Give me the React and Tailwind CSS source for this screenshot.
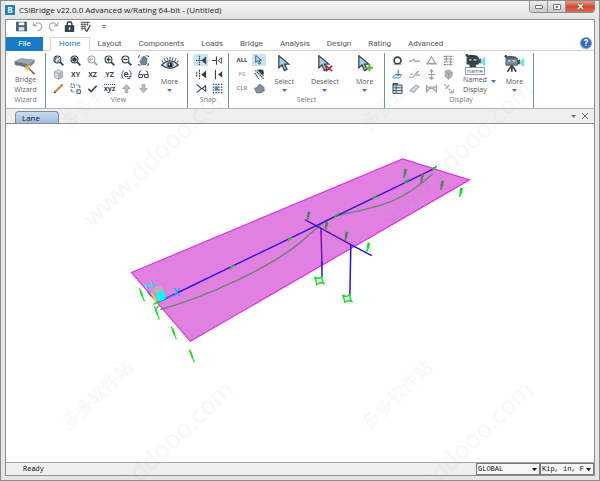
import React, { useState } from "react";
import clsx from "clsx";

const TABS = [
  "Home",
  "Layout",
  "Components",
  "Loads",
  "Bridge",
  "Analysis",
  "Design",
  "Rating",
  "Advanced",
];

const DARK = "#33444f";
const PALE = "#a3a3a3";

const Icon = ({ children, className = "h-[11px] w-[11px]", box = "0 0 16 16" }) => (
  <svg
    viewBox={box}
    className={clsx("shrink-0", className)}
    fill="none"
    stroke={DARK}
    strokeWidth="1.6"
    aria-hidden="true"
  >
    {children}
  </svg>
);

const Magnifier = ({ color = DARK, children }) => (
  <Icon>
    <g stroke={color}>
      <circle cx="6.5" cy="6.5" r="5" />
      <path d="M10.5 10.5L15 15" strokeWidth="2.6" />
      {children}
    </g>
  </Icon>
);

const Cursor = ({ className = "h-[17px] w-[17px]", children }) => (
  <Icon className={className} box="0 0 24 24">
    <path
      d="M4 1v17l4.5-4 3.5 8 3.5-1.6-3.6-7.6H18z"
      fill="#a9d3ea"
      strokeWidth="1.8"
    />
    {children}
  </Icon>
);

const Caret = ({ className = "h-[3px] w-[5px] text-[#3f74bd]" }) => (
  <svg viewBox="0 0 10 6" className={className} aria-hidden="true">
    <path d="M0 0h10L5 6z" fill="currentColor" />
  </svg>
);

// Small square ribbon button
const Tool = ({ label, active, children }) => (
  <button
    type="button"
    aria-label={label}
    title={label}
    className={clsx(
      "flex h-3 items-center justify-center text-[7px] leading-none font-bold text-[#33444f]",
      active && "bg-[#c9e4f7]"
    )}
  >
    {children}
  </button>
);

// Tall ribbon button with a caption
const BigTool = ({ label, children }) => (
  <button
    type="button"
    className="flex flex-col items-center text-[7px] leading-[10px] text-[#555]"
  >
    <span className="flex h-5 items-center">{children}</span>
    <span className="mt-1">{label}</span>
    <Caret className="mt-0.5 h-[3px] w-[5px] text-[#3f74bd]" />
  </button>
);

const Group = ({ title, className, children }) => (
  <section
    aria-label={title}
    className={clsx("flex flex-col border-r border-[#7391a8]", className)}
  >
    <div className="flex h-[42px] items-start">{children}</div>
    <h2 className="text-center text-[7px] leading-[10px] text-[#7a7a7a]">{title}</h2>
  </section>
);

const ViewTools = () => (
  <div className="grid grid-cols-6 gap-y-0.5 [&>button]:w-[17px]">
    <Tool label="Zoom window">
      <Magnifier>
        <path d="M4 9V4h5M9 6v3H6" strokeWidth="1.2" />
      </Magnifier>
    </Tool>
    <Tool label="Restore full view">
      <Magnifier>
        <circle cx="6.5" cy="6.5" r="2.6" fill="#173b46" />
      </Magnifier>
    </Tool>
    <Tool label="Previous zoom">
      <Magnifier color={PALE}>
        <path d="M9.5 6.5H3.5M6 4L3.5 6.5 6 9" strokeWidth="1.3" />
      </Magnifier>
    </Tool>
    <Tool label="Zoom in">
      <Magnifier>
        <path d="M3.5 6.5h6M6.5 3.5v6" strokeWidth="2" />
      </Magnifier>
    </Tool>
    <Tool label="Zoom out">
      <Magnifier>
        <path d="M3.5 6.5h6" strokeWidth="2" />
      </Magnifier>
    </Tool>
    <Tool label="Pan">
      <Icon>
        <path d="M1 4V1h3M12 1h3v3M15 12v3h-3M4 15H1v-3" strokeDasharray="2 1" />
        <path
          d="M5 14L2.5 8.500l1.500-.5L5.500 9.500V4h1.500V2.500h1.500V2H10v1.500h1.500V5H13v5l-1.500 4z"
          fill="#6f8a99"
          strokeWidth=".8"
        />
      </Icon>
    </Tool>

    <Tool label="3D view">
      <Icon>
        <path d="M8 1l6 3v8l-6 3-6-3V4z" fill="#d3d9dc" stroke="#85939b" strokeWidth="1" />
        <path d="M2 4l6 3 6-3M8 7v8" stroke="#85939b" strokeWidth="1" />
        <path d="M8 7l6-3v8l-6 3z" fill="#a9b6bd" stroke="none" />
      </Icon>
    </Tool>
    <Tool label="XY view">XY</Tool>
    <Tool label="XZ view">XZ</Tool>
    <Tool label="YZ view">YZ</Tool>
    <Tool label="Rotate view">
      <Icon>
        <path d="M4 2C0 6 1 11 4 14M12 2c4 4 3 9 0 12" strokeWidth="1.4" />
        <path d="M5 8h5c0-4-5-4-5 0s4 4 5 2" strokeWidth="1.6" />
        <path d="M12 10v4h-3" strokeWidth="1.3" />
      </Icon>
    </Tool>
    <Tool label="Perspective">
      <Icon>
        <path d="M1 8l2-5h2M15 8l-2-5h-2M6 9q2-2 4 0" strokeWidth="1.3" />
        <rect x="1" y="8" width="5.500" height="4.500" rx="1.500" strokeWidth="1.5" />
        <rect x="9.500" y="8" width="5.500" height="4.500" rx="1.500" strokeWidth="1.5" />
      </Icon>
    </Tool>

    <Tool label="Refresh view">
      <Icon>
        <path d="M3 13L13 3" stroke="#e8822b" strokeWidth="3" />
        <path d="M1 15l1-3.500L4.500 14z" fill={DARK} stroke="none" />
        <path d="M12 2l2 2" stroke="#b9552a" strokeWidth="2" />
      </Icon>
    </Tool>
    <Tool label="Object shrink">
      <Icon>
        <path d="M1.500 1.500h5v5h-5z" strokeDasharray="2 1" strokeWidth="1.2" />
        <path d="M10 10h5v5h-5z" strokeWidth="1.4" />
        <path d="M9 3h5v4M12 5l2 2 1.500-2M7 13H2V9M4 11L2 9 .5 11" stroke="#5689a5" strokeWidth="1.2" />
      </Icon>
    </Tool>
    <Tool label="Set display options">
      <Icon>
        <path d="M2 8.500l4 4L14 4" strokeWidth="2.4" />
      </Icon>
    </Tool>
    <Tool label="Show axes">
      <span className="border-t border-dotted border-[#33444f] leading-[7px]">xyz</span>
    </Tool>
    <Tool label="Move up in list">
      <Icon>
        <path d="M8 2l5.500 6H10v6H6V8H2.500z" fill="#bdbdbd" stroke="#999" strokeWidth="1" />
      </Icon>
    </Tool>
    <Tool label="Move down in list">
      <Icon>
        <path d="M8 14L2.500 8H6V2h4v6h3.500z" fill="#bdbdbd" stroke="#999" strokeWidth="1" />
      </Icon>
    </Tool>
  </div>
);

const SnapTools = () => (
  <div className="grid grid-cols-2 gap-x-0.5 gap-y-0.5 [&>button]:w-3.5">
    <Tool label="Snap to joints" active>
      <Icon>
        <path d="M0 8h8M5 1v14" strokeDasharray="2 1" />
        <path d="M9 8l5-4v8z" fill={DARK} />
      </Icon>
    </Tool>
    <Tool label="Snap to ends">
      <Icon>
        <path d="M0 8h6M6.500 2v12" />
        <path d="M9 8l5-4v8z" strokeWidth="1.3" />
      </Icon>
    </Tool>
    <Tool label="Snap to midpoints">
      <Icon>
        <path d="M5 1v14M1 4v8" strokeDasharray="3 1" />
        <path d="M9 8l5-4v8z" fill={DARK} />
      </Icon>
    </Tool>
    <Tool label="Snap to edges">
      <Icon>
        <path d="M5 1v14" />
        <path d="M10 8l4-3v6z" fill={DARK} />
      </Icon>
    </Tool>
    <Tool label="Snap to intersections">
      <Icon>
        <path d="M1 2l7 6-7 6" />
        <path d="M9 8l5-4v8z" strokeWidth="1.5" />
      </Icon>
    </Tool>
    <Tool label="Snap to grid">
      <Icon>
        <path d="M1 2h14M1 6h14M1 10h14M1 14h14" strokeWidth="2" strokeDasharray="2 2" />
        <rect x="4" y="5" width="5" height="6" fill="#3985bf" stroke="none" />
      </Icon>
    </Tool>
  </div>
);

const SelectTools = () => (
  <div className="grid grid-cols-2 gap-x-[3px] gap-y-0.5 [&>button]:w-3.5 [&>button]:text-[6px]">
    <Tool label="Select all">ALL</Tool>
    <Tool label="Pointer" active>
      <Cursor className="h-[10px] w-[10px]" />
    </Tool>
    <Tool label="Previous selection">
      <span className="text-[#b5b5b5]">PS</span>
    </Tool>
    <Tool label="Intersecting line">
      <Icon>
        <path d="M2 2l12 12M1 6l6 8M8 1l7 6" strokeDasharray="2 1" strokeWidth="2" />
        <path d="M6 2h7v7z" fill={DARK} />
      </Icon>
    </Tool>
    <Tool label="Clear selection">
      <span className="text-[#a0a0a0]">CLR</span>
    </Tool>
    <Tool label="Select polygon">
      <Icon>
        <path d="M1 8l4-2 3-4 6 4 1 5-5 3H4z" fill="#82939d" stroke="#6d7f89" />
      </Icon>
    </Tool>
  </div>
);

const DisplayTools = () => (
  <div className="grid grid-cols-4 gap-y-0.5 [&>button]:w-[17px]">
    <Tool label="Undeformed shape">
      <Icon>
        <circle cx="8" cy="8" r="5" strokeWidth="2.4" />
        <path d="M2 14h12" stroke="#8d9aa2" strokeWidth="1.2" />
      </Icon>
    </Tool>
    <Tool label="Deformed shape">
      <Icon>
        <path d="M0 9h4l3-3 3 4 2-1h4" stroke={PALE} strokeWidth="1.8" />
      </Icon>
    </Tool>
    <Tool label="Joint reactions">
      <Icon>
        <path d="M8 2.500l5.500 9.500h-11zM0 13h16" stroke={PALE} strokeWidth="1.8" />
      </Icon>
    </Tool>
    <Tool label="Influence lines">
      <Icon>
        <path d="M1 2h14M1 6h14M1 10h14M1 14h14" stroke="#929292" strokeWidth="2" strokeDasharray="4 1 2 1" />
        <path d="M5 1v8M11 4v11" stroke={PALE} />
      </Icon>
    </Tool>

    <Tool label="Load assigns">
      <Icon>
        <path d="M1 13l3-5h10l-3 5z" stroke="#3c9fbf" fill="#c5eef8" strokeWidth="1.3" />
        <path d="M9 1v8M7 7l2 3 2-3" stroke="#356f8d" strokeWidth="1.4" />
      </Icon>
    </Tool>
    <Tool label="Frame forces">
      <Icon>
        <path d="M0 12h6l3-4 2 1h5M9 8l5-5M2 9l3-2" stroke={PALE} strokeWidth="1.8" />
      </Icon>
    </Tool>
    <Tool label="Support reactions">
      <Icon>
        <path d="M8 1v14M5 12l3 3 3-3M3 8h10M6 4l2-3 2 3" stroke={PALE} strokeWidth="1.8" />
      </Icon>
    </Tool>
    <Tool label="Shell stresses">
      <Icon>
        <path d="M3 3l6-2 5 4-1 6-5 4-5-4z" fill="#b5b5b5" stroke={PALE} strokeWidth="1" />
        <path d="M3 3l5 4 6-2M8 7v8" stroke="#8e8e8e" strokeWidth="1" />
      </Icon>
    </Tool>

    <Tool label="Show tables">
      <Icon>
        <rect x="1.500" y="3" width="13" height="12" fill="#dceaf2" strokeWidth="1.3" />
        <path d="M1 7h14M1 11h14M6 3v12" strokeWidth="1.2" />
        <path d="M1 3l2-2h6" strokeWidth="2.4" />
      </Icon>
    </Tool>
    <Tool label="Bridge superstructure forces">
      <Icon>
        <path d="M1 11l9-8 5 2-8 9z" fill="#c9c9c9" stroke={PALE} strokeWidth="1.3" />
        <path d="M5 11l7-6" stroke="#eee" strokeWidth="1.3" />
      </Icon>
    </Tool>
    <Tool label="Virtual work">
      <Icon>
        <path d="M1 3v11M15 3v11M1 6h14M1 13l4-5h6l4 5" stroke={PALE} strokeWidth="1.8" />
      </Icon>
    </Tool>
    <Tool label="Plot functions">
      <Icon>
        <path d="M2 2l12 12M9 3L3 9" stroke={PALE} strokeDasharray="3 1.500" strokeWidth="1.9" />
        <path d="M9 14h6V9" stroke={PALE} />
      </Icon>
    </Tool>
  </div>
);

const Camera = ({ tripod }) => (
  <Icon className="h-[18px] w-[22px]" box="0 0 30 24">
    <path d="M4 6h16v9H4z" fill={tripod ? "#7d8a91" : DARK} strokeWidth="1" />
    <circle cx="4" cy="3" r="2" fill="#33444f" stroke="none" />
    <path d="M4 4l4-2 9 1 3 3H5z" fill={tripod ? "#4b5a64" : "#26353e"} stroke="none" />
    <path d="M20 9l3-2v7l-3-1z" fill="#33444f" stroke="none" />
    <path d="M23 10l6-6v14l-6-5z" fill="#72e3ee" stroke="none" />
    <path d="M7 9h3M13 9h4" stroke="#dbe4e8" strokeWidth="1.8" />
    {tripod ? (
      <path d="M12 15L6 24M12 15v9M12 15l6 9" strokeWidth="2.2" />
    ) : (
      <path d="M8 15h8v4H8z" fill={DARK} strokeWidth="1" />
    )}
  </Icon>
);

const Ribbon = () => (
  <div className="flex h-[57px] shrink-0 overflow-hidden bg-white pt-0.5">
    <section
      aria-label="Wizard"
      className="flex w-10 flex-col items-center border-r border-[#7391a8]"
    >
      <button
        type="button"
        className="flex h-[42px] flex-col items-center pt-1 text-[7px] leading-[10px] text-[#666]"
      >
        <Icon className="h-[18px] w-[22px]" box="0 0 30 24">
          <path d="M1 6l9-4 18 2-8 6z" fill="#9cabb3" stroke="#768791" strokeWidth="1" />
          <path d="M1 6l19 4v5l-4 1v-2L5 11v1L1 10z" fill="#64757f" stroke="none" />
          <path d="M20 10l8-6v4l-6 5z" fill="#7d8e98" stroke="none" />
          <path d="M20 15l8 8" stroke="#8b6232" strokeWidth="2.2" />
          <path d="M18 10v8M14 14h8M15.500 11.500l5 5M20.500 11.500l-5 5" stroke="#f0b23c" strokeWidth="1.3" />
        </Icon>
        <span>Bridge</span>
        <span>Wizard</span>
      </button>
      <h2 className="text-center text-[7px] leading-[10px] text-[#7a7a7a]">Wizard</h2>
    </section>

    <Group title="View" className="w-[142px] pl-1">
      <div className="pt-px">
        <ViewTools />
      </div>
      <div className="flex flex-1 justify-center">
        <BigTool label="More">
          <Icon className="h-[15px] w-[18px]" box="0 0 24 20">
            <path d="M1 12Q12 1 23 12Q12 21 1 12z" fill="#e3eaee" strokeWidth="1.8" />
            <circle cx="12" cy="12" r="4" fill="#26353e" stroke="#5d8499" />
            <path d="M12 5V1M6 7L4 3M18 7l2-4M3 9L1 6M21 9l2-3M9 5L8 2M15 5l1-3" strokeWidth="1.3" />
            <circle cx="11" cy="11" r="1" fill="#fff" stroke="none" />
          </Icon>
        </BigTool>
      </div>
    </Group>

    <Group title="Snap" className="w-[41px]">
      <div className="pt-px pl-1.5">
        <SnapTools />
      </div>
    </Group>

    <Group title="Select" className="w-[156px]">
      <div className="pt-px pl-1.5">
        <SelectTools />
      </div>
      <div className="flex flex-1 justify-around pr-0.5">
        <BigTool label="Select">
          <Cursor />
        </BigTool>
        <BigTool label="Deselect">
          <Cursor>
            <path d="M14 15l9 8M23 15l-9 8" stroke="#b5222b" strokeWidth="2.2" />
          </Cursor>
        </BigTool>
        <BigTool label="More">
          <Cursor>
            <path d="M19 13v10M14 18h10" stroke="#6bb325" strokeWidth="3" />
          </Cursor>
        </BigTool>
      </div>
    </Group>

    <Group title="Display" className="w-[149px] pl-1">
      <div className="pt-px">
        <DisplayTools />
      </div>
      <button
        type="button"
        className="ml-1.5 flex items-end text-[7px] leading-[10px] text-[#555]"
      >
        <span className="flex flex-col items-center">
          <span className="flex h-[22px] flex-col items-center">
            <Camera />
            <span className="-mt-1 border border-[#8ba0ac] bg-white px-px text-[6px] leading-[6px]">
              name
            </span>
          </span>
          <span>Named</span>
          <span>Display</span>
        </span>
        <Caret className="mb-3 ml-1 h-[3px] w-[5px] text-[#3f74bd]" />
      </button>
      <div className="flex flex-1 justify-center">
        <BigTool label="More">
          <Camera tripod />
        </BigTool>
      </div>
    </Group>
  </div>
);

const TitleBar = () => (
  <header className="flex h-[18px] shrink-0 items-start justify-between bg-linear-to-b from-[#f4f4f4] to-[#e2e2e2]">
    <div className="flex h-[18px] items-center gap-1">
      <span className="flex h-2.5 w-2.5 items-center justify-center bg-[#1d7fd6] text-[8px] leading-none font-bold text-white">
        B
      </span>
      <h1 className="text-[8px] leading-3 text-[#222]">
        CSiBridge v22.0.0 Advanced w/Rating 64-bit - (Untitled)
      </h1>
    </div>
    <div className="flex h-3 overflow-hidden rounded-b-sm border border-t-0 border-[#8b8b8b]">
      <button
        type="button"
        aria-label="Minimize"
        className="flex w-[18px] items-center justify-center border-r border-[#999] bg-linear-to-b from-[#ededed] to-[#c9c9c9]"
      >
        <span className="h-1 w-2 rounded-[1px] border border-[#777] bg-white" />
      </button>
      <button
        type="button"
        aria-label="Maximize"
        className="flex w-[18px] items-center justify-center border-r border-[#999] bg-linear-to-b from-[#ededed] to-[#c9c9c9]"
      >
        <span className="flex h-1.5 w-2 items-center justify-center rounded-[1px] border border-[#777] bg-white">
          <span className="h-0.5 w-0.5 bg-[#777]" />
        </span>
      </button>
      <button
        type="button"
        aria-label="Close"
        className="flex w-7 items-center justify-center bg-linear-to-b from-[#e99b87] via-[#cf4a30] to-[#d8694c]"
      >
        <svg viewBox="0 0 8 8" className="h-[7px] w-[7px]" aria-hidden="true">
          <path d="M1 1l6 6M7 1L1 7" stroke="#7c3529" strokeWidth="2.8" />
          <path d="M1 1l6 6M7 1L1 7" stroke="#fff" strokeWidth="1.7" />
        </svg>
      </button>
    </div>
  </header>
);

const QuickAccess = () => (
  <div className="flex h-[17px] shrink-0 items-start gap-[5px] bg-white pt-px pl-2.5">
    <button type="button" aria-label="Save">
      <Icon>
        <path d="M1 2h14v12H1z" fill="#4d6c84" stroke="#38536a" />
        <path d="M4 2h8v4H4z" fill="#fff" stroke="none" />
        <path d="M4 9h8v5H4z" fill="#dce6ec" stroke="none" />
      </Icon>
    </button>
    <button type="button" aria-label="Undo">
      <Icon>
        <path d="M2 7l5-4q7-1 7 5t-6 6M2 7V2M2 7h5" stroke="#b0b0b0" strokeWidth="1.8" />
      </Icon>
    </button>
    <button type="button" aria-label="Redo">
      <Icon>
        <path d="M14 7L9 3Q2 2 2 8t6 6M14 7V2M14 7H9" stroke="#b0b0b0" strokeWidth="1.8" />
      </Icon>
    </button>
    <button type="button" aria-label="Lock model">
      <Icon>
        <path d="M4.500 8V5q0-4 3.500-4t3.500 4v3" strokeWidth="2" />
        <rect x="2" y="7" width="12" height="8" fill={DARK} stroke="#26353e" />
        <path d="M8 9v4" stroke="#fff" strokeWidth="1.8" />
      </Icon>
    </button>
    <button type="button" aria-label="Run analysis">
      <Icon>
        <path d="M1 2h14M1 5h11M1 8h8M1 11h7M3 1v13M7 1v11M11 1v6" stroke="#555" strokeWidth="1.2" />
        <path d="M7 12l3 3 5-9" stroke="#444" strokeWidth="1.8" />
      </Icon>
    </button>
    <button
      type="button"
      aria-label="Customize toolbar"
      className="ml-1.5 flex h-[11px] flex-col items-center justify-center gap-px"
    >
      <span className="h-px w-1 bg-[#6d8cab]" />
      <Caret className="h-0.5 w-1 text-[#6d8cab]" />
    </button>
  </div>
);

const TabStrip = ({ active, onSelect }) => (
  <nav className="flex h-[14px] shrink-0 items-stretch border-b border-[#d6d6d6] bg-white font-['Roboto',sans-serif] text-[8px] leading-3">
    <button type="button" className="mr-[7px] -mb-px w-[37px] bg-[#1979ca] text-white">
      File
    </button>
    {TABS.map((tab) => (
      <button
        key={tab}
        type="button"
        onClick={() => onSelect(tab)}
        className={clsx(
          "px-2",
          tab === active
            ? "-mb-px border border-[#d6d6d6] border-b-white bg-white text-[#1c74bd]"
            : "border-t border-r border-transparent text-[#555]"
        )}
      >
        {tab}
      </button>
    ))}
    <button
      type="button"
      aria-label="Help"
      className="mr-0.5 ml-auto flex h-3 w-3 items-center justify-center rounded-full border border-[#8fa3c9] bg-[#3568c0] text-[9px] leading-none font-bold text-white shadow-sm"
    >
      ?
    </button>
  </nav>
);

const LANE_MARKS = [
  [139, 289],
  [154, 307],
  [171, 327],
  [189, 350],
];

const JOINTS = [
  [231, 267],
  [289, 239],
  [336, 215],
  [374, 197],
  [406, 181],
  [434, 168],
];

const RESTRAINTS = [
  [308, 217, "#547f54"],
  [326, 227, "#547f54"],
  [346, 237, "#547f54"],
  [368, 248, "#0fdf1f"],
  [405, 174, "#547f54"],
  [422, 179, "#547f54"],
  [442, 186, "#547f54"],
  [461, 193, "#0fdf1f"],
];

const SUPPORTS = [
  [319, 281],
  [347, 299],
];

const ModelView = () => (
  <svg
    viewBox="6 124 588 339"
    className="min-h-0 w-full flex-1 bg-white"
    fill="none"
    role="img"
    aria-label="Bridge lane model"
  >
    <path d="M131 273L403 159L470 180L190 342Z" fill="#e080e0" stroke="#dd32dd" strokeWidth="1.2" />
    <path
      d="M160 310C205 298 270 268 300 243C318 228 325 218 345 214C385 206 405 200 433 174"
      stroke="#6f7f78"
      strokeWidth="1.4"
    />
    <path d="M157 303L434 169" stroke="#3a10dc" strokeWidth="1.5" />

    {/* Bent cap and columns */}
    <path d="M305 220L351 245" stroke="#5412b8" strokeWidth="1.4" />
    <path d="M351 245L372 256" stroke="#1c17d4" strokeWidth="1.4" />
    <path d="M321 228L322 265" stroke="#7210bc" strokeWidth="1.5" />
    <path d="M322 262L322 278M351 245L350 296" stroke="#1c17ea" strokeWidth="1.5" />
    {SUPPORTS.map(([x, y]) => (
      <path
        key={x}
        d={`M${x - 4} ${y - 3}l4 1 3-2v3l2 4-4-1-3 2-1-4z`}
        stroke="#0fdf1f"
        strokeWidth="1.4"
      />
    ))}

    {JOINTS.map(([x, y]) => (
      <path key={x} d={`M${x - 1} ${y + 3}l1-3h2l1-2`} stroke="#22c52e" strokeWidth="1.5" />
    ))}
    {RESTRAINTS.map(([x, y, color]) => (
      <g key={x} stroke={color}>
        <path d={`M${x + 1} ${y - 5}l-1 6`} strokeWidth="2.6" />
        <path d={`M${x} ${y + 1}l-1 3`} strokeWidth="1.6" />
      </g>
    ))}
    {LANE_MARKS.map(([x, y]) => (
      <g key={x} stroke="#14e01c">
        <path d={`M${x} ${y}l5 13`} strokeWidth="1.2" />
        <path d={`M${x + 1} ${y + 2}l2 6`} strokeWidth="1.8" />
      </g>
    ))}

    {/* Origin triad */}
    <path d="M155 294l8-4 3 9-8 4z" fill="#0ff5fb" />
    <path d="M152 291l3-4 6-1 3 4-9 4z" fill="#b9b3b4" />
    <path d="M151 293l5 9" stroke="#f2d21a" strokeWidth="2" />
    <path d="M147 292l4 5" stroke="#3f6cf5" strokeWidth="1.4" />
    <path d="M153 305l6-3M156 309l3-3" stroke="#14e01c" strokeWidth="1.4" />
    <path d="M165 299l7-3" stroke="#1d8de8" strokeWidth="1.2" />
    <text
      x="149"
      y="290"
      textAnchor="middle"
      transform="rotate(65 149 286)"
      className="fill-[#0fe8f5] text-[11px] font-bold"
    >
      Z
    </text>
    <text x="173" y="297" className="fill-[#14b3ea] text-[10px] font-bold">
      X
    </text>
  </svg>
);

const STAMPS = [
  [92, 227, 68, 130],
  [392, 227, 368, 130],
  [92, 527, 68, 430],
  [392, 527, 368, 430],
];

const Watermark = () => (
  <svg
    className="pointer-events-none absolute inset-0 h-full w-full fill-[#6b78b5] opacity-[0.05]"
    aria-hidden="true"
  >
    {STAMPS.map(([x, y, cx, cy]) => (
      <g key={`${x}-${y}`}>
        <text x={x} y={y} transform={`rotate(-44 ${x} ${y})`} className="text-[25px]">
          www.ddooo.com
        </text>
        <text x={cx} y={cy} transform={`rotate(-44 ${cx} ${cy})`} className="text-[18px]">
          多多软件站
        </text>
      </g>
    ))}
  </svg>
);

const StatusSelect = ({ label, options, className }) => (
  <div className={clsx("relative flex border border-[#777] bg-[#f6f6f6]", className)}>
    <select
      aria-label={label}
      className="w-full appearance-none bg-transparent pl-px text-[7px] leading-[10px] text-[#111] outline-none"
    >
      {options.map((option) => (
        <option key={option}>{option}</option>
      ))}
    </select>
    <Caret className="pointer-events-none absolute top-1 right-0.5 h-[3px] w-[5px] text-[#111]" />
  </div>
);

const App = () => {
  const [activeTab, setActiveTab] = useState("Home");

  return (
    <div className="relative flex h-screen w-full flex-col overflow-hidden border border-[#8a8a8a] bg-[#e6e6e6] px-1 pb-1 font-['Open_Sans','Noto_Sans_CJK_SC',sans-serif]">
      <TitleBar />
      <main className="flex min-h-0 flex-1 flex-col border border-[#8f8f8f] bg-white">
        <QuickAccess />
        <TabStrip active={activeTab} onSelect={setActiveTab} />
        <Ribbon />

        <div className="flex h-4 shrink-0 items-end justify-between border-t border-b border-t-[#b4b4b4] border-b-[#8c8c8c] bg-[#efefef] pl-[9px]">
          <button
            type="button"
            className="h-3 w-11 rounded-t-sm border border-b-0 border-[#7c8ea6] bg-linear-to-b from-[#cbdcf0] to-[#9dbce0] pl-1.5 text-left text-[8px] leading-[11px] text-[#222]"
          >
            Lane
          </button>
          <div className="flex h-full items-center gap-1.5 pr-1.5">
            <button type="button" aria-label="Window list">
              <Caret className="h-[3px] w-[5px] text-[#777]" />
            </button>
            <button type="button" aria-label="Close view">
              <svg viewBox="0 0 8 8" className="h-1.5 w-1.5" aria-hidden="true">
                <path d="M0 0l8 8M8 0L0 8" stroke="#666" strokeWidth="1.3" />
              </svg>
            </button>
          </div>
        </div>

        <ModelView />

        <footer className="flex h-[13px] shrink-0 items-stretch border-t border-[#a5a5a5] bg-[#efefef] font-['Liberation_Mono',monospace] text-[7px] leading-3 text-[#111]">
          <span className="flex-1 pl-[17px]">Ready</span>
          <StatusSelect label="Coordinate system" options={["GLOBAL"]} className="w-16" />
          <StatusSelect label="Units" options={["Kip, in, F"]} className="w-[54px]" />
        </footer>
      </main>
      <Watermark />
    </div>
  );
};

export default App;
